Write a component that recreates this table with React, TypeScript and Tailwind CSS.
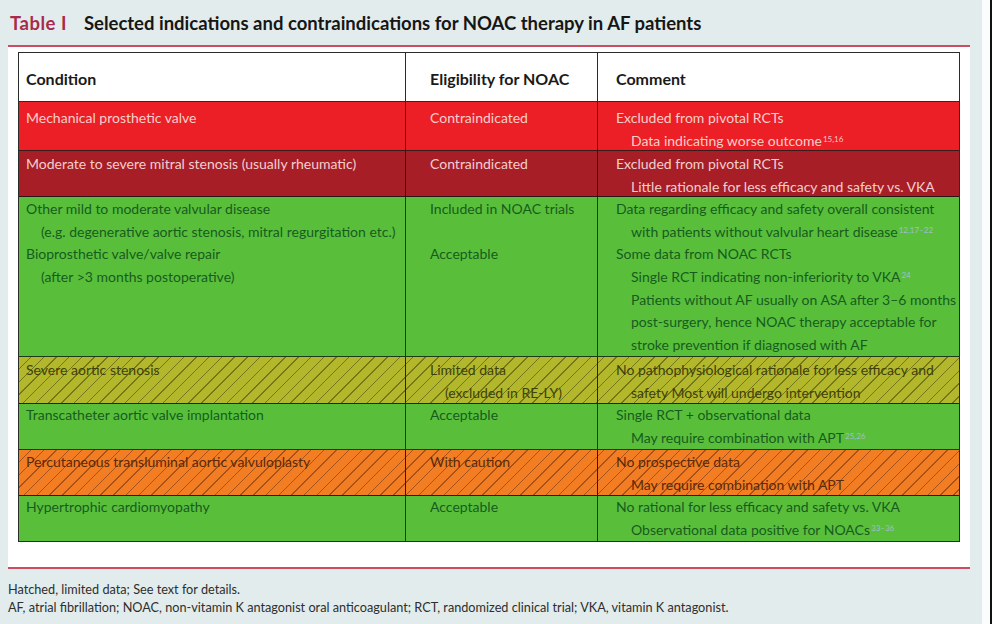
const font = { fontFamily: "Lato, 'Open Sans', sans-serif" };

type Line = { text: string; indent?: boolean; sup?: string };
type Row = {
  height: string;
  pt: string;
  bg: string;
  text: string;
  sup: string;
  border: string;
  cells: [Line[], Line[], Line[]];
};

const rows: Row[] = [
  {
    height: "h-[49px]",
    pt: "pt-[5px]",
    bg: "bg-[#ec1f26]",
    text: "text-[#f8cfca]",
    sup: "text-[#f3c9c6]",
    border: "border-[#3a1a1a]",
    cells: [
      [{ text: "Mechanical prosthetic valve" }],
      [{ text: "Contraindicated" }],
      [
        { text: "Excluded from pivotal RCTs" },
        { text: "Data indicating worse outcome", indent: true, sup: "15,16" },
      ],
    ],
  },
  {
    height: "h-[46px]",
    pt: "pt-[2px]",
    bg: "bg-[#a81e27]",
    text: "text-[#f1cfcf]",
    sup: "text-[#f1cfcf]",
    border: "border-[#2a1414]",
    cells: [
      [{ text: "Moderate to severe mitral stenosis (usually rheumatic)" }],
      [{ text: "Contraindicated" }],
      [
        { text: "Excluded from pivotal RCTs" },
        { text: "Little rationale for less efficacy and safety vs. VKA", indent: true },
      ],
    ],
  },
  {
    height: "h-[160px]",
    pt: "pt-[1px]",
    bg: "bg-[#59bf3b]",
    text: "text-[#175c1e]",
    sup: "text-[#a3bccb]",
    border: "border-[#1d3a1a]",
    cells: [
      [
        { text: "Other mild to moderate valvular disease" },
        { text: "(e.g. degenerative aortic stenosis, mitral regurgitation etc.)", indent: true },
        { text: "Bioprosthetic valve/valve repair" },
        { text: "(after >3 months postoperative)", indent: true },
      ],
      [{ text: "Included in NOAC trials" }, { text: "" }, { text: "Acceptable" }],
      [
        { text: "Data regarding efficacy and safety overall consistent" },
        { text: "with patients without valvular heart disease", indent: true, sup: "12,17–22" },
        { text: "Some data from NOAC RCTs" },
        { text: "Single RCT indicating non-inferiority to VKA", indent: true, sup: "24" },
        { text: "Patients without AF usually on ASA after 3–6 months", indent: true },
        { text: "post-surgery, hence NOAC therapy acceptable for", indent: true },
        { text: "stroke prevention if diagnosed with AF", indent: true },
      ],
    ],
  },
  {
    height: "h-[47px]",
    pt: "pt-[2px]",
    bg: "bg-[repeating-linear-gradient(135deg,#b3b72c_0px,#b3b72c_8px,#737619_8px,#737619_9px)]",
    text: "text-[#3f420c]",
    sup: "text-[#3f420c]",
    border: "border-[#1d2a10]",
    cells: [
      [{ text: "Severe aortic stenosis" }],
      [{ text: "Limited data" }, { text: "(excluded in RE-LY)", indent: true }],
      [
        { text: "No pathophysiological rationale for less efficacy and" },
        { text: "safety Most will undergo intervention", indent: true },
      ],
    ],
  },
  {
    height: "h-[46px]",
    pt: "pt-0",
    bg: "bg-[#59bf3b]",
    text: "text-[#175c1e]",
    sup: "text-[#a3bccb]",
    border: "border-[#1d3a1a]",
    cells: [
      [{ text: "Transcatheter aortic valve implantation" }],
      [{ text: "Acceptable" }],
      [
        { text: "Single RCT + observational data" },
        { text: "May require combination with APT", indent: true, sup: "25,26" },
      ],
    ],
  },
  {
    height: "h-[46px]",
    pt: "pt-[1px]",
    bg: "bg-[repeating-linear-gradient(135deg,#f27d22_0px,#f27d22_8px,#a8521a_8px,#a8521a_9px)]",
    text: "text-[#5a2a0c]",
    sup: "text-[#5a2a0c]",
    border: "border-[#2a1a10]",
    cells: [
      [{ text: "Percutaneous transluminal aortic valvuloplasty" }],
      [{ text: "With caution" }],
      [
        { text: "No prospective data" },
        { text: "May require combination with APT", indent: true },
      ],
    ],
  },
  {
    height: "h-[45px]",
    pt: "pt-0",
    bg: "bg-[#59bf3b]",
    text: "text-[#175c1e]",
    sup: "text-[#a3bccb]",
    border: "border-[#1d3a1a]",
    cells: [
      [{ text: "Hypertrophic cardiomyopathy" }],
      [{ text: "Acceptable" }],
      [
        { text: "No rational for less efficacy and safety vs. VKA" },
        { text: "Observational data positive for NOACs", indent: true, sup: "33–36" },
      ],
    ],
  },
];

const cellPad = ["pl-[7px]", "pl-[24px]", "pl-[18px]"];

const Cell = ({ lines, col, row }: { lines: Line[]; col: number; row: Row }) => (
  <div
    className={`${cellPad[col]} ${row.pt} ${col < 2 ? "border-r-[1.5px] " + row.border : ""} text-[14px] leading-[22.7px] ${row.text}`}
  >
    {lines.map((l, i) => (
      <div key={i} className={`${l.indent ? "pl-[15px]" : ""} h-[22.7px] whitespace-nowrap`}>
        {l.text}
        {l.sup && <sup className={`text-[8px] ml-[1px] ${row.sup}`}>{l.sup}</sup>}
      </div>
    ))}
  </div>
);

export default function App() {
  return (
    <div className="w-[992px] h-[624px] flex bg-[#e2ecec] overflow-hidden" style={font}>
      <div className="w-[982px] flex flex-col">
        {/* Title */}
        <div className="h-[45px] flex items-center pl-[10px] pt-[2px] text-[18.5px] font-bold">
          <span className="text-[#a82a4c] tracking-[0.5px]">Table I</span>
          <span className="ml-[17px] text-[#161616]">
            Selected indications and contraindications for NOAC therapy in AF patients
          </span>
        </div>
        <div className="ml-[8px] w-[962px] h-[2px] bg-[#cc4d62]" />

        {/* Table panel */}
        <div className="ml-[8px] w-[962px] bg-white pt-[5px] pb-[25px] px-[10px]">
          <div className="border-[1.5px] border-[#2b2b2b]">
            <div className="grid grid-cols-[387px_192px_1fr] h-[49px] bg-white border-b-[1.5px] border-[#2b2b2b] text-[16px] font-bold text-[#1a1a1a]">
              <div className="pl-[7px] flex items-center pt-[3px] border-r-[1.5px] border-[#2b2b2b]">Condition</div>
              <div className="pl-[24px] flex items-center pt-[3px] border-r-[1.5px] border-[#2b2b2b]">Eligibility for NOAC</div>
              <div className="pl-[18px] flex items-center pt-[3px]">Comment</div>
            </div>
            {rows.map((row, ri) => (
              <div
                key={ri}
                className={`grid grid-cols-[387px_192px_1fr] ${row.height} ${row.bg} ${ri < rows.length - 1 ? "border-b-[1.5px] " + row.border : ""}`}
              >
                {row.cells.map((lines, ci) => (
                  <Cell key={ci} lines={lines} col={ci} row={row} />
                ))}
              </div>
            ))}
          </div>
        </div>
        <div className="ml-[8px] w-[962px] h-[2px] bg-[#cc4d62]" />

        {/* Footnotes */}
        <div className="pl-[8px] pt-[11px] text-[12.7px] leading-[18px] text-[#2e2e2e]">
          <p>Hatched, limited data; See text for details.</p>
          <p>
            AF, atrial fibrillation; NOAC, non-vitamin K antagonist oral anticoagulant; RCT, randomized clinical trial; VKA,
            vitamin K antagonist.
          </p>
        </div>
      </div>
      <div className="flex-1 bg-[#fbfdfd] border-r-2 border-[#111]" />
    </div>
  );
}
